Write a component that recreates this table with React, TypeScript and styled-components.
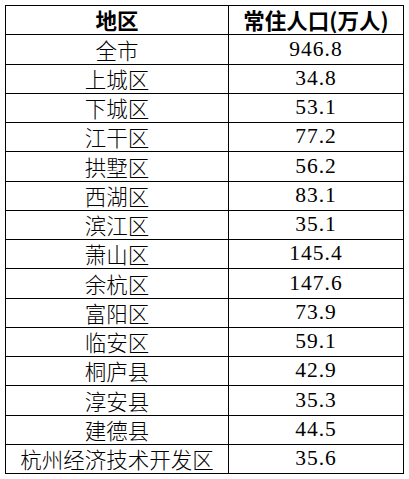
import React from 'react';
import styled, { createGlobalStyle } from 'styled-components';

const rows: [string, string][] = [
  ['全市', '946.8'],
  ['上城区', '34.8'],
  ['下城区', '53.1'],
  ['江干区', '77.2'],
  ['拱墅区', '56.2'],
  ['西湖区', '83.1'],
  ['滨江区', '35.1'],
  ['萧山区', '145.4'],
  ['余杭区', '147.6'],
  ['富阳区', '73.9'],
  ['临安区', '59.1'],
  ['桐庐县', '42.9'],
  ['淳安县', '35.3'],
  ['建德县', '44.5'],
  ['杭州经济技术开发区', '35.6'],
];

const GlobalStyle = createGlobalStyle`
  html, body {
    margin: 0;
    padding: 0;
    background: #fff;
  }
`;

const Page = styled.div`
  padding: 5px 0 0 5px;
`;

const Table = styled.table`
  border-collapse: collapse;
  table-layout: fixed;
  width: 398px;
  color: #000;
`;

const Cell = styled.td<{ $num?: boolean; $head?: boolean }>`
  border: 1px solid #000;
  height: 28.25px;
  padding: 0;
  text-align: center;
  vertical-align: middle;
  line-height: 1;
  font-size: 21.5px;
  font-weight: ${p => (p.$head ? 700 : 300)};
  font-family: ${p =>
    p.$num
      ? '"Liberation Serif", "Noto Sans CJK SC", serif'
      : '"Noto Sans CJK SC", sans-serif'};
  letter-spacing: ${p => (p.$num ? '1px' : '0')};
`;

export default function App() {
  return (
    <Page>
      <GlobalStyle />
      <Table>
        <colgroup>
          <col style={{ width: 223 }} />
          <col style={{ width: 175 }} />
        </colgroup>
        <tbody>
          <tr>
            <Cell $head>地区</Cell>
            <Cell $head>常住人口(万人)</Cell>
          </tr>
          {rows.map(([name, value]) => (
            <tr key={name}>
              <Cell>{name}</Cell>
              <Cell $num>{value}</Cell>
            </tr>
          ))}
        </tbody>
      </Table>
    </Page>
  );
}
